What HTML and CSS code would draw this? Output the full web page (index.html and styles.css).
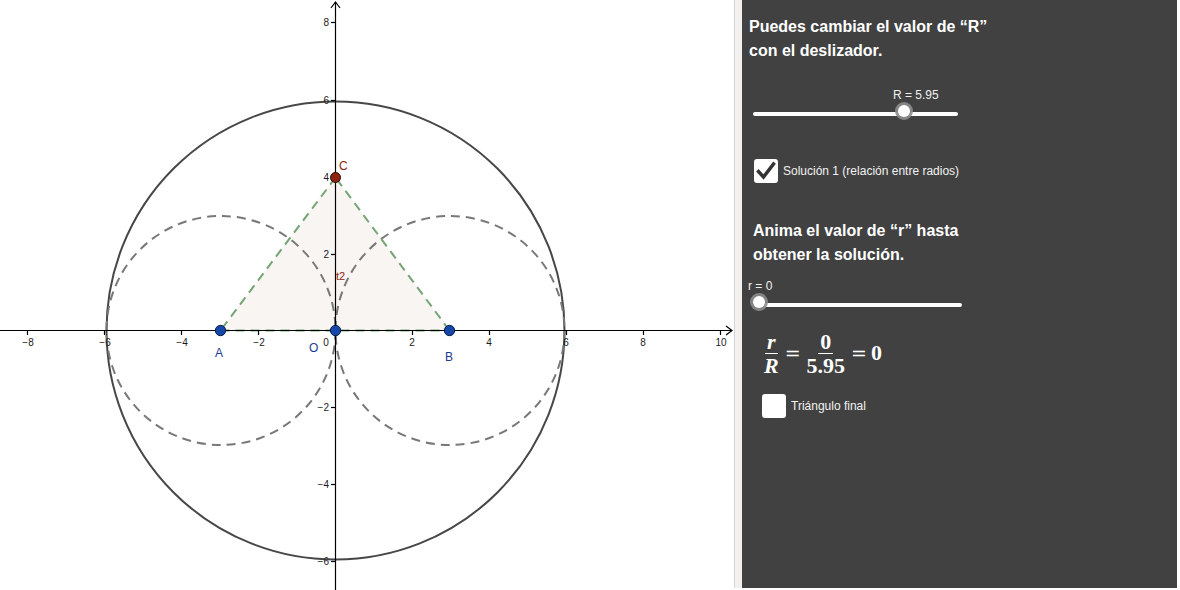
FILE: index.html
```html
<!DOCTYPE html>
<html lang="es">
<head>
<meta charset="utf-8">
<title>Circunferencias</title>
<link rel="stylesheet" href="styles.css">
</head>
<body>
<div class="app">
  <div class="graphics">
    <svg class="plot" width="734" height="590" viewBox="0 0 734 590" xmlns="http://www.w3.org/2000/svg">
      <polygon points="220.5,330.5 449.5,330.5 335.5,177.5" fill="#f8f5f3"/>
      <circle cx="335.5" cy="330.5" r="229" fill="none" stroke="#474747" stroke-width="2"/>
      <circle cx="221" cy="330.5" r="114.5" fill="none" stroke="#787878" stroke-width="2" stroke-dasharray="9 6"/>
      <circle cx="450" cy="330.5" r="114.5" fill="none" stroke="#787878" stroke-width="2" stroke-dasharray="9 6"/>
      <g fill="none" stroke="#75a475" stroke-width="2" stroke-dasharray="9 6">
        <line x1="220.5" y1="330.5" x2="449.5" y2="330.5"/>
        <line x1="449.5" y1="330.5" x2="335.5" y2="177.5"/>
        <line x1="335.5" y1="177.5" x2="220.5" y2="330.5"/>
      </g>
      <g stroke="#000" stroke-width="1.2" fill="none">
        <line x1="0" y1="330.5" x2="732" y2="330.5"/>
        <polyline points="726,326 732,330.5 726,335"/>
        <line x1="335.5" y1="2" x2="335.5" y2="590"/>
        <polyline points="331,8 335.5,2 340,8"/>
        <line x1="27.5" y1="330.5" x2="27.5" y2="335"/>
        <line x1="104.5" y1="330.5" x2="104.5" y2="335"/>
        <line x1="181.5" y1="330.5" x2="181.5" y2="335"/>
        <line x1="258.5" y1="330.5" x2="258.5" y2="335"/>
        <line x1="412.5" y1="330.5" x2="412.5" y2="335"/>
        <line x1="489.5" y1="330.5" x2="489.5" y2="335"/>
        <line x1="566.5" y1="330.5" x2="566.5" y2="335"/>
        <line x1="643.5" y1="330.5" x2="643.5" y2="335"/>
        <line x1="720.5" y1="330.5" x2="720.5" y2="335"/>
        <line x1="331" y1="22.5" x2="335.5" y2="22.5"/>
        <line x1="331" y1="100.5" x2="335.5" y2="100.5"/>
        <line x1="331" y1="177.5" x2="335.5" y2="177.5"/>
        <line x1="331" y1="254.5" x2="335.5" y2="254.5"/>
        <line x1="331" y1="407.5" x2="335.5" y2="407.5"/>
        <line x1="331" y1="484.5" x2="335.5" y2="484.5"/>
        <line x1="331" y1="561.5" x2="335.5" y2="561.5"/>
      </g>
      <g class="tick" text-anchor="middle">
        <text x="28" y="346">−8</text>
        <text x="105" y="346">−6</text>
        <text x="182" y="346">−4</text>
        <text x="259" y="346">−2</text>
        <text x="326" y="346">0</text>
        <text x="412" y="346">2</text>
        <text x="489" y="346">4</text>
        <text x="566" y="346">6</text>
        <text x="643" y="346">8</text>
        <text x="721" y="346">10</text>
      </g>
      <g class="tick" text-anchor="end">
        <text x="329" y="26">8</text>
        <text x="329" y="104">6</text>
        <text x="329" y="181">4</text>
        <text x="329" y="258">2</text>
        <text x="329" y="411">−2</text>
        <text x="329" y="488">−4</text>
        <text x="329" y="565">−6</text>
      </g>
      <circle cx="220.5" cy="330.5" r="5.2" fill="#1547a8" stroke="#0b1c44" stroke-width="1"/>
      <circle cx="449.5" cy="330.5" r="5.2" fill="#1547a8" stroke="#0b1c44" stroke-width="1"/>
      <circle cx="335.5" cy="330.5" r="5.2" fill="#1547a8" stroke="#0b1c44" stroke-width="1"/>
      <circle cx="335.5" cy="177.5" r="5" fill="#8d2410" stroke="#2a0800" stroke-width="1"/>
      <text class="lbl lbl-blue" x="215" y="357">A</text>
      <text class="lbl lbl-blue" x="445" y="361">B</text>
      <text class="lbl lbl-blue" x="309" y="352">O</text>
      <text class="lbl lbl-red" x="339" y="170">C</text>
      <text class="lbl lbl-red small" x="336" y="280">t2</text>
    </svg>
  </div>
  <div class="divider"></div>
  <div class="panel">
    <p class="heading heading-first">Puedes cambiar el valor de “R”<br>con el deslizador.</p>
    <div class="slider slider-R">
      <div class="slider-label slider-label-R">R = 5.95</div>
      <div class="track track-R">
        <span class="knob knob-R"></span>
      </div>
    </div>
    <label class="check check-1">
      <span class="box">
        <svg width="24" height="24" viewBox="0 0 24 24"><path d="M4.5 12.5 L9.5 18 L19.5 5" fill="none" stroke="#333" stroke-width="3.4" stroke-linecap="square" stroke-linejoin="miter"/></svg>
      </span>
      <span class="check-text">Solución 1 (relación entre radios)</span>
    </label>
    <p class="heading heading-second">Anima el valor de “r” hasta<br>obtener la solución.</p>
    <div class="slider slider-r">
      <div class="slider-label">r = 0</div>
      <div class="track track-r">
        <span class="knob knob-r"></span>
      </div>
    </div>
    <div class="formula">
      <span class="frac"><span class="num it">r</span><span class="den it">R</span></span>
      <span class="eq">=</span>
      <span class="frac"><span class="num">0</span><span class="den">5.95</span></span>
      <span class="eq">=</span>
      <span class="val">0</span>
    </div>
    <label class="check check-2">
      <span class="box"></span>
      <span class="check-text">Triángulo final</span>
    </label>
  </div>
</div>
</body>
</html>
```
FILE: styles.css
```css
html, body {
  margin: 0;
  padding: 0;
  background: #ffffff;
}
body {
  width: 1180px;
  height: 590px;
  overflow: hidden;
  font-family: "Liberation Sans", Arial, sans-serif;
}
.app {
  display: flex;
  height: 590px;
}
.graphics {
  width: 734px;
  height: 590px;
  flex: none;
  background: #ffffff;
}
.plot {
  display: block;
}
.tick {
  font-family: "Liberation Sans", Arial, sans-serif;
  font-size: 10px;
  fill: #1a1a1a;
}
.lbl {
  font-family: "Liberation Sans", Arial, sans-serif;
  font-size: 12px;
}
.lbl-blue { fill: #1a3a8f; }
.lbl-red { fill: #8d2410; }
.small { font-size: 11px; }

.divider {
  width: 7px;
  flex: none;
  height: 588px;
  border-left: 1px solid #d6d6d6;
  background: #f3f1ef;
}
.panel {
  width: 435px;
  height: 588px;
  flex: none;
  background: #414141;
  color: #ffffff;
  display: flex;
  flex-direction: column;
  align-items: flex-start;
}
.heading {
  margin: 0;
  font-weight: bold;
  font-size: 16px;
  line-height: 24px;
}
.heading-first {
  margin: 15px 0 0 7px;
}
.heading-second {
  margin: 36px 0 0 11px;
}
.slider {
  display: flex;
  flex-direction: column;
}
.slider-label {
  font-size: 12px;
  line-height: 14px;
  color: #f0f0f0;
}
.slider-R {
  margin: 25px 0 0 11px;
  align-items: flex-start;
}
.slider-label-R {
  margin-left: 140px;
}
.slider-r {
  margin: 12px 0 0 6px;
}
.track {
  position: relative;
  height: 4px;
  border-radius: 2px;
  background: #ffffff;
}
.track-R {
  width: 205px;
  margin-top: 10px;
}
.track-r {
  width: 205px;
  margin: 10px 0 0 9px;
}
.knob {
  position: absolute;
  top: -7px;
  width: 12px;
  height: 12px;
  border-radius: 50%;
  background: #ffffff;
  box-shadow: 0 0 0 3px rgba(140, 140, 140, 0.9);
}
.knob-R { left: 145px; }
.knob-r { left: -4px; }

.check {
  display: flex;
  align-items: center;
  gap: 5px;
}
.check-1 {
  margin: 43px 0 0 12px;
}
.check-2 {
  margin: 17px 0 0 20px;
}
.box {
  width: 24px;
  height: 24px;
  border-radius: 3px;
  background: #ffffff;
  display: block;
}
.box svg { display: block; }
.check-text {
  font-size: 12px;
  color: #f2f2f2;
}
.formula {
  margin: 24px 0 0 20px;
  display: flex;
  align-items: center;
  gap: 4px;
  font-family: "Liberation Serif", "DejaVu Serif", serif;
  font-weight: bold;
  font-size: 22px;
  color: #ffffff;
}
.frac {
  display: inline-flex;
  flex-direction: column;
  align-items: center;
}
.num, .den {
  line-height: 22px;
  padding: 0 2px;
}
.num {
  border-bottom: 1px solid #ffffff;
  margin-bottom: 1px;
}
.it {
  font-style: italic;
}
.eq {
  font-family: "DejaVu Serif", serif;
  font-weight: normal;
  font-size: 19px;
  padding-bottom: 3px;
}
.val {
  padding-bottom: 2px;
}
```
